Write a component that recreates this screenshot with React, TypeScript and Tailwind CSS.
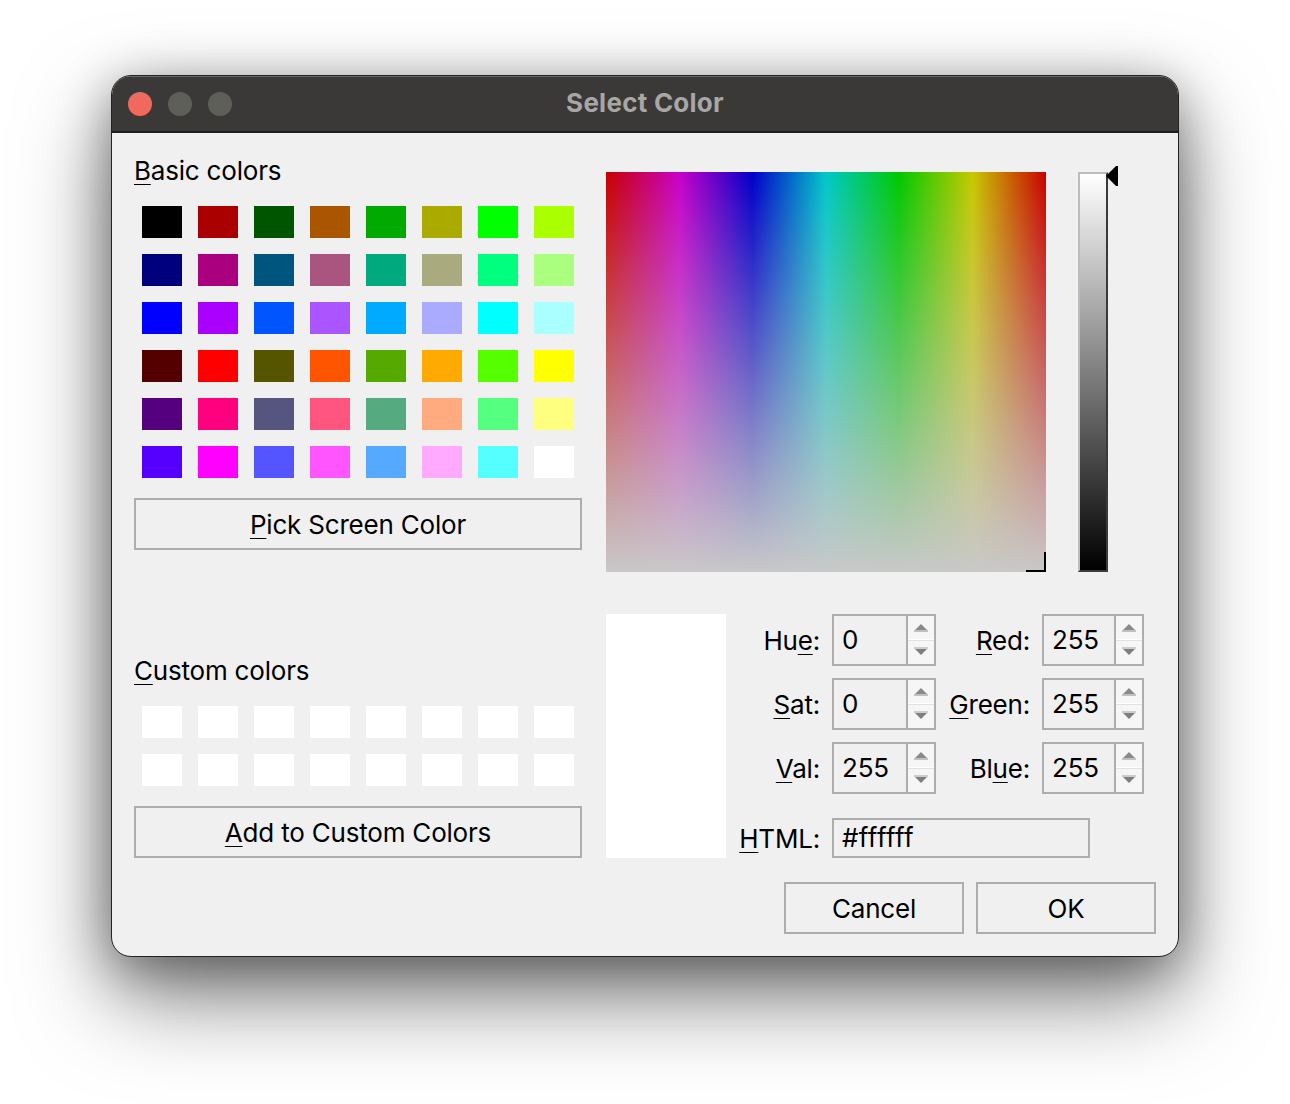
const basicColors = [
  "bg-[#000000]", "bg-[#aa0000]", "bg-[#005500]", "bg-[#aa5500]", "bg-[#00aa00]", "bg-[#aaaa00]", "bg-[#00ff00]", "bg-[#aaff00]",
  "bg-[#00007f]", "bg-[#aa007f]", "bg-[#00557f]", "bg-[#aa557f]", "bg-[#00aa7f]", "bg-[#aaaa7f]", "bg-[#00ff7f]", "bg-[#aaff7f]",
  "bg-[#0000ff]", "bg-[#aa00ff]", "bg-[#0055ff]", "bg-[#aa55ff]", "bg-[#00aaff]", "bg-[#aaaaff]", "bg-[#00ffff]", "bg-[#aaffff]",
  "bg-[#550000]", "bg-[#ff0000]", "bg-[#555500]", "bg-[#ff5500]", "bg-[#55aa00]", "bg-[#ffaa00]", "bg-[#55ff00]", "bg-[#ffff00]",
  "bg-[#55007f]", "bg-[#ff007f]", "bg-[#55557f]", "bg-[#ff557f]", "bg-[#55aa7f]", "bg-[#ffaa7f]", "bg-[#55ff7f]", "bg-[#ffff7f]",
  "bg-[#5500ff]", "bg-[#ff00ff]", "bg-[#5555ff]", "bg-[#ff55ff]", "bg-[#55aaff]", "bg-[#ffaaff]", "bg-[#55ffff]", "bg-[#ffffff]",
];

function Key({ children }: { children: string }) {
  return <span className="underline decoration-1 underline-offset-[4px] [text-decoration-skip-ink:none]">{children}</span>;
}

function Swatches({ colors }: { colors: string[] }) {
  return (
    <div className="grid grid-cols-8 gap-x-4 gap-y-4 px-2">
      {colors.map((color, index) => (
        <div className={`w-10 h-8 ${color}`} key={index}></div>
      ))}
    </div>
  );
}

function PushButton({ children, className }: { children: React.ReactNode; className: string }) {
  return (
    <div className={`h-[52px] pt-0.5 flex items-center justify-center border-2 border-[#adadad] ${className}`}>
      {children}
    </div>
  );
}

function Spin({ label, value, boxWidth, fieldWidth }: { label: React.ReactNode; value: string; boxWidth: string; fieldWidth: string }) {
  return (
    <div className="flex items-center h-[52px]">
      <div className="w-[90px] mr-3 pt-0.5 text-right">{label}</div>
      <div className={`h-[52px] flex border-2 border-[#adadad] ${boxWidth}`}>
        <div className={`pl-2 flex items-center ${fieldWidth}`}>{value}</div>
        <div className="w-7 flex flex-col border-l-2 border-[#adadad]">
          <div className="h-6 flex items-center justify-center bg-[#f6f6f6] border-b border-[#ffffff]">
            <svg width="16" height="8" viewBox="0 0 16 8">
              <path d="M8 0 L14 6 H2 Z" fill="#8a8a8a" />
              <path d="M1 6 H15 V8 H1 Z" fill="#c0c0c0" />
            </svg>
          </div>
          <div className="flex-1 pb-1 flex items-center justify-center bg-[#f6f6f6] border-t border-[#e2e2e2]">
            <svg width="16" height="8" viewBox="0 0 16 8">
              <path d="M1 0 H15 V2 H1 Z" fill="#cccccc" />
              <path d="M2 2 H14 L8 8 Z" fill="#808080" />
            </svg>
          </div>
        </div>
      </div>
    </div>
  );
}

export default function App() {
  return (
    <div className="w-[1290px] h-[1104px] bg-white pl-[111px] pt-[75px] overflow-hidden font-['Inter',sans-serif] text-[26px] leading-none tracking-[-0.2px] text-black">
      <div className="w-[1068px] h-[882px] flex flex-col rounded-[20px] overflow-hidden border border-[#222222] bg-[#f0f0f0] shadow-[0_40px_90px_rgba(0,0,0,0.5),0_10px_50px_rgba(0,0,0,0.35)]">
        <div className="relative h-[57px] shrink-0 flex items-center bg-[#3a3937] border-t border-[#6b6a68] border-b-2 border-b-[#1e1e1e] pl-4 gap-4">
          <div className="w-6 h-6 rounded-full bg-[#f0695c]"></div>
          <div className="w-6 h-6 rounded-full bg-[#5f5f5a]"></div>
          <div className="w-6 h-6 rounded-full bg-[#5f5f5a]"></div>
          <div className="absolute inset-0 pb-0.5 flex items-center justify-center font-bold tracking-[0.25px] text-[#a8a7a5]">Select Color</div>
        </div>

        <div className="flex-1 flex pl-[22px] pt-[25px]">
          <div className="w-[448px] flex flex-col">
            <div className="h-[26px] flex items-center"><span><Key>B</Key>asic colors</span></div>
            <div className="mt-[22px]"><Swatches colors={basicColors} /></div>
            <PushButton className="mt-5 w-[448px]"><span><Key>P</Key>ick Screen Color</span></PushButton>
            <div className="h-[26px] mt-[108px] flex items-center"><span><Key>C</Key>ustom colors</span></div>
            <div className="mt-[22px]"><Swatches colors={Array(16).fill("bg-white")} /></div>
            <PushButton className="mt-5 w-[448px]"><span><Key>A</Key>dd to Custom Colors</span></PushButton>
          </div>

          <div className="ml-6 flex-1 flex flex-col">
            <div className="flex pt-[14px]">
              <div className="relative w-[440px] h-[400px] bg-[linear-gradient(to_right,#c80000,#c800c8,#0000c8,#00c8c8,#00c800,#c8c800,#c80000)]">
                <div className="absolute inset-0 bg-[linear-gradient(to_bottom,rgba(200,200,200,0),rgb(200,200,200))]"></div>
                <div className="absolute right-0 bottom-0 w-5 h-5 border-r-2 border-b-2 border-black"></div>
              </div>
              <div className="relative ml-8 w-[30px] h-[400px] border-l-2 border-t-2 border-l-[#bdbdbd] border-t-[#bdbdbd] border-r-2 border-b-2 border-r-[#3a3a3a] border-b-[#3a3a3a] bg-[linear-gradient(to_bottom,#ffffff,#000000)]">
                <svg className="absolute left-[26px] -top-2" width="12" height="20" viewBox="0 0 12 20"><path d="M0 10 L10 0 H12 V20 H10 Z" fill="#000" /></svg>
              </div>
            </div>

            <div className="flex mt-[42px]">
              <div className="w-[120px] h-[244px] bg-white shrink-0"></div>
              <div className="ml-1 flex flex-col">
                <div className="flex gap-1">
                  <div className="flex flex-col gap-3">
                    <Spin boxWidth="w-[104px]" fieldWidth="w-[72px]" label={<span>Hu<Key>e</Key>:</span>} value="0" />
                    <Spin boxWidth="w-[104px]" fieldWidth="w-[72px]" label={<span><Key>S</Key>at:</span>} value="0" />
                    <Spin boxWidth="w-[104px]" fieldWidth="w-[72px]" label={<span><Key>V</Key>al:</span>} value="255" />
                  </div>
                  <div className="flex flex-col gap-3">
                    <Spin boxWidth="w-[102px]" fieldWidth="w-[70px]" label={<span><Key>R</Key>ed:</span>} value="255" />
                    <Spin boxWidth="w-[102px]" fieldWidth="w-[70px]" label={<span><Key>G</Key>reen:</span>} value="255" />
                    <Spin boxWidth="w-[102px]" fieldWidth="w-[70px]" label={<span>Bl<Key>u</Key>e:</span>} value="255" />
                  </div>
                </div>
                <div className="flex items-center mt-6">
                  <div className="w-[90px] mr-3 pt-0.5 text-right"><Key>H</Key>TML:</div>
                  <div className="w-[258px] h-10 pl-2 flex items-center border-2 border-[#adadad] tracking-[0.4px]">#ffffff</div>
                </div>
              </div>
            </div>

            <div className="flex justify-end gap-3 mt-6 pr-[22px]">
              <PushButton className="w-[180px]">Cancel</PushButton>
              <PushButton className="w-[180px]">OK</PushButton>
            </div>
          </div>
        </div>
      </div>
    </div>
  );
}
